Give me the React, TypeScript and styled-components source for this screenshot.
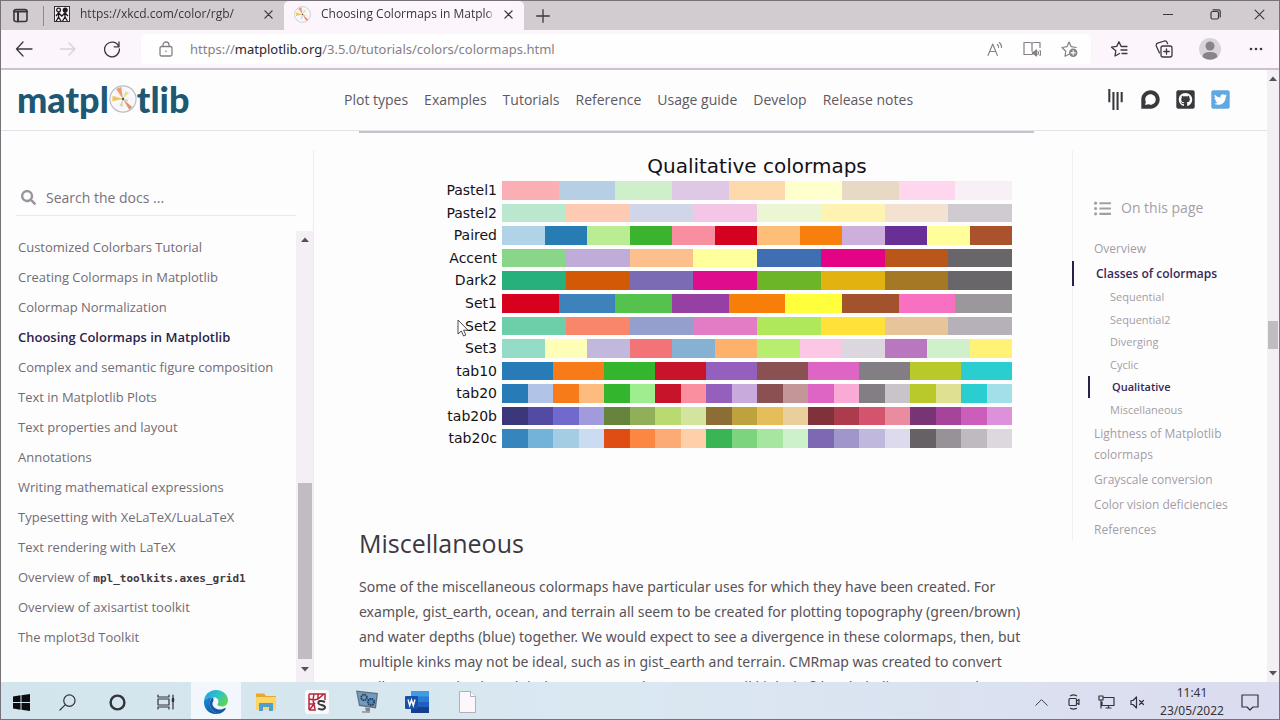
import React from "react";
import styled, { createGlobalStyle } from "styled-components";
import {
  FaDiscourse,
  FaGithubSquare,
  FaGitter,
  FaListUl,
  FaSearch,
  FaTwitterSquare,
} from "react-icons/fa";

const sans = `"Open Sans", "Noto Sans", sans-serif`;
const ui = `"Noto Sans", "Open Sans", sans-serif`;

const GlobalStyle = createGlobalStyle`
  * { box-sizing: border-box; }
  body { margin: 0; font-family: ${sans}; background: #fefdfe; }
  button { border: 0; padding: 0; background: none; color: inherit; font: inherit; }
  ul { list-style: none; margin: 0; padding: 0; }
  a { color: inherit; text-decoration: none; }
  svg { display: block; flex: none; }
`;

/* ---------- window ---------- */

const Window = styled.div`
  display: flex;
  flex-direction: column;
  height: 100vh;
  overflow: hidden;
  border: 1px solid #77727a;
`;

const TabStrip = styled.div`
  display: flex;
  align-items: stretch;
  height: 29px;
  flex: none;
  background: #d2ccd1;
  color: #3a363b;
`;

const TabActions = styled.button`
  display: grid;
  place-items: center;
  width: 38px;
`;

const TabDivider = styled.span`
  width: 1px;
  margin: 5px 0 4px 4px;
  background: #8e888e;
`;

const Tab = styled.div<{ $active?: boolean }>`
  display: flex;
  align-items: center;
  gap: 10px;
  width: 240px;
  padding: 0 11px 3px 10px;
  font-size: 12px;
  line-height: 16px;
  border-radius: 5px 5px 0 0;
  background: ${(p) => (p.$active ? "#fcf5fc" : "transparent")};
`;

const TabTitle = styled.span`
  flex: 1;
  overflow: hidden;
  white-space: nowrap;
  mask-image: linear-gradient(90deg, #000 96%, transparent);
`;

const IconButton = styled.button<{ $w?: number }>`
  display: grid;
  place-items: center;
  flex: none;
  width: ${(p) => (p.$w ? p.$w + "px" : "auto")};
`;

const WindowControls = styled.div`
  display: flex;
  margin-left: auto;
  padding-bottom: 3px;
`;

const Toolbar = styled.div`
  display: flex;
  align-items: stretch;
  height: 40px;
  flex: none;
  padding: 4px 0 4px;
  background: #fcf5fc;
  border-bottom: 2px solid #c9c3ca;
  color: #3c383e;
`;

const AddressBar = styled.div`
  display: flex;
  align-items: center;
  flex: 1;
  margin: 0 7px 0 6px;
  background: #fffeff;
  border-radius: 4px;
  color: #857f86;
`;

const UrlField = styled.div`
  flex: 1;
  display: flex;
  font: 13px/20px ${ui};
  white-space: nowrap;
  overflow: hidden;
  b {
    font-weight: 400;
    color: #29252b;
  }
`;

/* ---------- web page ---------- */

const Viewport = styled.div`
  display: flex;
  flex: 1;
  min-height: 0;
  background: #fefdfe;
`;

const Site = styled.div`
  flex: 1;
  min-width: 0;
  display: flex;
  flex-direction: column;
`;

const SiteHeader = styled.header`
  display: flex;
  align-items: center;
  flex: none;
  height: 61px;
  padding: 0 36px 0 16px;
  border-bottom: 1px solid #e6e0e7;
  color: #5d595f;
`;

const Logo = styled.a`
  display: flex;
  align-items: center;
  width: 327px;
  padding-bottom: 3px;
  font: 900 36px/44px Lato, sans-serif;
  color: #1f5873;
`;

const SiteNav = styled.nav`
  display: flex;
  flex: 1;
  gap: 16px;
  font-size: 14px;
  line-height: 20px;
  white-space: nowrap;
`;

const Social = styled.div`
  display: flex;
  gap: 14px;
  padding-bottom: 1px;
  color: #3b383d;
`;

const Columns = styled.div`
  display: flex;
  flex: 1;
  min-height: 0;
`;

const Sidebar = styled.aside`
  display: flex;
  flex-direction: column;
  width: 313px;
  flex: none;
  margin-top: 19px;
  border-right: 1px solid #f0e9f1;
`;

const Search = styled.label`
  display: flex;
  align-items: center;
  gap: 10px;
  height: 36px;
  margin: 30px 17px 15px 15px;
  padding: 0 5px;
  border-bottom: 1px solid #ece7ed;
  color: #9a959c;
  input {
    flex: 1;
    min-width: 0;
    border: 0;
    padding: 0;
    outline: 0;
    background: none;
    font: 14px/20px ${sans};
    color: #77727a;
  }
  input::placeholder {
    color: #77727a;
    opacity: 1;
  }
`;

const SideScroll = styled.div`
  display: flex;
  flex: 1;
  min-height: 0;
`;

const SideList = styled.ul`
  flex: 1;
  padding: 1px 0 0 17px;
  font-size: 13px;
  line-height: 30px;
  color: #716c73;
  white-space: nowrap;
  code {
    font: 700 11px "DejaVu Sans Mono", monospace;
    color: #3f3b42;
  }
`;

const SideItem = styled.li<{ $current?: boolean }>`
  font-weight: ${(p) => (p.$current ? 600 : 400)};
  color: ${(p) => (p.$current ? "#2b1f4c" : "inherit")};
`;

const ScrollTrack = styled.div<{ $w: number }>`
  display: flex;
  flex-direction: column;
  align-items: center;
  width: ${(p) => p.$w}px;
  flex: none;
  background: #f4eff5;
`;

const ScrollThumb = styled.span<{ $w: number; $h: number }>`
  width: ${(p) => p.$w}px;
  height: ${(p) => p.$h}px;
  background: #c1bcc2;
`;

const Gap = styled.span<{ $grow: number }>`
  flex: ${(p) => p.$grow} 1 0;
`;

const Article = styled.main`
  flex: 1;
  min-width: 0;
  padding: 0 38px 0 45px;
  overflow: hidden;
`;

const FigureEdge = styled.div`
  height: 2px;
  background: #c6c2cb;
`;

const Figure = styled.figure`
  position: relative;
  margin: 21px 22px 79px 73px;
  color: #141216;
  font-family: "DejaVu Sans", sans-serif;
  h3 {
    margin: 0 0 3px 70px;
    text-align: center;
    font-size: 20px;
    line-height: 24px;
    font-weight: 400;
  }
`;

const MapList = styled.div`
  display: grid;
  grid-template-rows: repeat(12, 1fr);
  row-gap: 4px;
  height: 267px;
`;

const MapRow = styled.div`
  display: flex;
  gap: 5px;
  min-height: 0;
`;

const MapName = styled.span`
  width: 65px;
  text-align: right;
  font-size: 14px;
  line-height: 18px;
`;

const Swatches = styled.div`
  display: flex;
  flex: 1;
`;

const Swatch = styled.span<{ $c: string }>`
  flex: 1;
  background: ${(p) => p.$c};
`;

const Cursor = styled.svg`
  position: absolute;
  left: 25px;
  top: 165px;
`;

const SectionTitle = styled.h2`
  margin: 0 0 15px;
  font-size: 25px;
  line-height: 32px;
  font-weight: 400;
  color: #3c393e;
`;

const Paragraph = styled.p`
  margin: 0;
  font: 14px/25px ${ui};
  color: #565258;
  white-space: nowrap;
  i {
    font-family: "Liberation Serif", serif;
    font-size: 17px;
    line-height: 1;
  }
`;

const Toc = styled.aside`
  width: 195px;
  flex: none;
  height: 390px;
  margin-top: 19px;
  padding-left: 21px;
  border-left: 1px solid #f3edf4;
  color: #a39da5;
`;

const TocTitle = styled.div`
  display: flex;
  align-items: center;
  gap: 10px;
  margin: 48px 0 18px;
  font-size: 14px;
  line-height: 20px;
`;

const TocLink = styled.a<{ $current?: boolean }>`
  display: block;
  padding: 2px 0;
  ${(p) =>
    p.$current &&
    `margin-left: -22px; padding-left: 22px; border-left: 2px solid #2b1f4c; color: #35295a; font-weight: 600;`}
`;

const TocList = styled.ul`
  font-size: 12px;
  line-height: 21px;
`;

const TocSubList = styled.ul`
  display: grid;
  grid-template-rows: repeat(6, 1fr);
  height: 135px;
  padding-left: 16px;
  font-size: 11px;
  line-height: 18px;
`;

/* ---------- taskbar ---------- */

const Taskbar = styled.footer`
  display: flex;
  align-items: stretch;
  flex: none;
  height: 37px;
  padding-right: 10px;
  background: linear-gradient(90deg, #d2e5ec, #dae8f2 50%, #dbdcef);
  color: #35333a;
`;

const TaskButton = styled.button<{ $w: number; $active?: boolean }>`
  display: grid;
  place-items: center;
  width: ${(p) => p.$w}px;
  padding-top: 3px;
  background: ${(p) => (p.$active ? "#f1f7fc" : "transparent")};
`;

const Tray = styled.div`
  display: flex;
  margin-left: auto;
`;

const Clock = styled.time`
  width: 78px;
  padding-top: 2px;
  text-align: center;
  font: 12px/18px ${ui};
`;

/* ---------- data ---------- */

const colormaps: [string, string][] = [
  ["Pastel1", "#fbaeb4 #b7cfe4 #cfefca #dfc7e6 #fed9ab #ffffce #e7d9c4 #fed6ee #f7f1f7"],
  ["Pastel2", "#bae8cf #fecbb2 #d0d5e8 #f3c5e7 #ebf7d2 #fff3b2 #f3e1d2 #d0cbd1"],
  ["Paired", "#b0d3e7 #287cb4 #b9ec93 #3bb32f #f88fa1 #d4011f #fdbf78 #f87f0d #cdafdb #682f96 #fffe9b #a9522b"],
  ["Accent", "#8ad688 #c0acd8 #fcc08d #ffff9b #3f6eb3 #e30384 #b9561a #69666a"],
  ["Dark2", "#27b07b #d25a07 #7b6bb4 #df0c8d #6bb526 #e2b210 #a57824 #69666a"],
  ["Set1", "#d5011f #3e82bb #56c24e #9640a3 #f77e09 #ffff3b #a2522c #f870c1 #9c979c"],
  ["Set2", "#6dceaa #f9866b #949fce #e37bc5 #afe85b #ffe13a #e7c49a #b6b0b8"],
  ["Set3", "#95dcc8 #fffeb7 #c2b7dc #f37477 #86b1d2 #fdb16b #b7ee70 #fbc7e5 #dcd7de #b877bf #cff0ca #fff276"],
  ["tab10", "#277cb7 #f77b19 #34b52e #c8142b #955fbd #8b5152 #df65c5 #837e84 #bac92a #2acdd0"],
  ["tab20", "#277cb7 #b1c4e8 #f77b19 #fdbb80 #34b52e #9eee8f #c8142b #fa8fa0 #955fbd #c8abdc #8b5152 #c39798 #df65c5 #f9abd5 #837e84 #c9c4ca #bac92a #dfe091 #2acdd0 #a2e0e9"],
  ["tab20b", "#3c367b #534ba3 #7269cf #a19bdd #66843c #91ae59 #b9da70 #d3e49f #8b6d35 #bea23e #e5be5a #e9cf9c #80323b #ac3c4c #d4546e #e98c9f #793475 #a54498 #cc5dbb #dd91da"],
  ["tab20c", "#3785bd #73b2d9 #a4cde3 #cbdcf2 #df4d15 #fb8743 #fbab73 #fecfa9 #39b556 #7cd47e #a7e6a0 #cdf1c8 #7c68b3 #a196cc #c1b9dd #dddaee #656165 #979297 #bebabf #dcd8dd"],
];

const navLinks = ["Plot types", "Examples", "Tutorials", "Reference", "Usage guide", "Develop", "Release notes"];

const tutorials: React.ReactNode[] = [
  "Customized Colorbars Tutorial",
  "Creating Colormaps in Matplotlib",
  "Colormap Normalization",
  "Choosing Colormaps in Matplotlib",
  "Complex and semantic figure composition",
  "Text in Matplotlib Plots",
  "Text properties and layout",
  "Annotations",
  "Writing mathematical expressions",
  "Typesetting with XeLaTeX/LuaLaTeX",
  "Text rendering with LaTeX",
  <>Overview of <code>mpl_toolkits.axes_grid1</code></>,
  "Overview of axisartist toolkit",
  "The mplot3d Toolkit",
];

const toc: { title: string; children?: string[] }[] = [
  { title: "Overview" },
  {
    title: "Classes of colormaps",
    children: ["Sequential", "Sequential2", "Diverging", "Cyclic", "Qualitative", "Miscellaneous"],
  },
  { title: "Lightness of Matplotlib colormaps" },
  { title: "Grayscale conversion" },
  { title: "Color vision deficiencies" },
  { title: "References" },
];

/* ---------- drawings ---------- */

const Line = ({ w = 18, h = 18, sw = 1.3, box = "0 0 18 18", children }: any) => (
  <svg width={w} height={h} viewBox={box} fill="none" stroke="currentColor" strokeWidth={sw} strokeLinecap="round" strokeLinejoin="round">
    {children}
  </svg>
);

const CloseX = ({ s = 9, sw = 1.4 }) => (
  <Line w={s} h={s} box="0 0 10 10" sw={sw}><path d="M1 1l8 8M9 1l-8 8" /></Line>
);

const Pie = ({ s }: { s: number }) => (
  <svg width={s} height={s} viewBox="0 0 30 30">
    <circle cx="15" cy="15" r="14" fill="#faf8fa" stroke="#b6bcc8" strokeWidth="1.2" />
    <circle cx="15" cy="15" r="9.3" fill="none" stroke="#ececf0" strokeWidth=".4" />
    <path d="M1 15h28M15 1v28M5 5l20 20M25 5L5 25" stroke="#ececf0" strokeWidth=".4" />
    <path d="M15 15L7.500 4.200l5.600-2z" fill="#eb9d78" />
    <path d="M15 15L3.500 17.500l.4-6z" fill="#f0c659" />
    <path d="M15 15l2.400-8.200 3.800 1.600z" fill="#dbe39b" />
    <path d="M15 15l9.800 8.500-3.200 3z" fill="#e68f6d" />
    <path d="M15 15l-.5 8-3.300-.8z" fill="#c3dcae" />
    <path d="M15 15l5.500 1-.8 2z" fill="#b7d3bd" />
    <circle cx="15" cy="15" r="1.300" fill="#555" />
  </svg>
);

const XkcdIcon = () => (
  <svg width="16" height="16" viewBox="0 0 16 16">
    <rect x=".5" y=".5" width="15" height="15" fill="#f4f0f4" stroke="#333" />
    <g stroke="#1c1a1d" strokeWidth="1.3" fill="none">
      <circle cx="4.6" cy="4" r="1.9" />
      <circle cx="11.2" cy="4" r="1.9" fill="#1c1a1d" />
      <path d="M4.6 6v5l-2.4 4M4.6 11l2.4 4M4.6 7L2 10M4.6 7l3.2 3 3.2-3 3 3M11 6v5l-2.4 4M11 11l2.4 4" />
    </g>
  </svg>
);

const Arrow = ({ up }: { up?: boolean }) => (
  <svg width="8" height="5" viewBox="0 0 8 5">
    <path d={up ? "M0 5l4-4.5L8 5z" : "M0 0l4 4.5L8 0z"} fill="#55515a" />
  </svg>
);

const EdgeLogo = () => (
  <svg width="26" height="26" viewBox="0 0 26 26">
    <defs>
      <linearGradient id="edgeTop" x1="0" y1="0" x2="1" y2=".6">
        <stop offset="0" stopColor="#1aa0e0" /><stop offset=".55" stopColor="#2cc3c9" /><stop offset="1" stopColor="#5ed455" />
      </linearGradient>
      <linearGradient id="edgeLow" x1="0" y1="0" x2="1" y2="1">
        <stop offset="0" stopColor="#1d8fdc" /><stop offset="1" stopColor="#0c4a94" />
      </linearGradient>
    </defs>
    <path d="M1 12.5C1 6 6.4 1 13 1s12 4.600 12 10.500c0 3.800-2.800 6-6 6-3 0-4.600-1.200-4.600-2 0-.6 1-1.200 1-3.100 0-2.300-2-4.200-5-4.200C5.500 8.200 1.600 10 1 12.500z" fill="url(#edgeTop)" />
    <path d="M1 12.500C1.500 10 5 8.200 10.400 8.200 8 9 6.500 12 6.800 15.500 7.300 20 11 24 15.500 24.700 7 26.500 .5 20.500 1 12.500z" fill="url(#edgeLow)" />
    <path d="M10.400 12c-1.200 1.500-1.300 3.500-.2 5.300 1.800 2.900 6.300 4.400 11.300 1.900.9-.4 1.600.2 1 1.100-1.900 3-5 4.400-7 4.400C11 24 7.300 20 6.800 15.500 6.600 12 8 9 10.400 8.200z" fill="#155aa8" />
  </svg>
);

const FolderIcon = () => (
  <svg width="22" height="20" viewBox="0 0 22 20">
    <path d="M1 1.500h8l2 2.500h10v14H1z" fill="#e7a92c" />
    <path d="M1 5h20v13H1z" fill="#fbd565" />
    <path d="M4 11h14v8h-4v-4H8v4H4z" fill="#4f9fce" />
  </svg>
);

const SpyderIcon = () => (
  <svg width="24" height="24" viewBox="0 0 24 24">
    <rect width="24" height="24" rx="3" fill="#fcf9fb" />
    <path d="M4 4h16v6M4 4v15q0 1 1 1h6M4 9l5 1M4 14l5 0M9 4L8 10l2 9M19 4l-6 5-4 1M13 4v5M5 19l5-6" stroke="#b5263c" strokeWidth="1.500" fill="none" />
    <path d="M20 12c-4-2-7.500-1-6.500 1.500.8 2 6.500 1 6.500 3.800 0 2.500-4.500 2.700-7 1.200" stroke="#3d3b3f" strokeWidth="2" fill="none" />
  </svg>
);

const MonitorGear = () => (
  <svg width="24" height="24" viewBox="0 0 24 24">
    <path d="M1 .500l22 2.500-2 15.500L4 16z" fill="#66717f" />
    <path d="M2.500 2l19 2.200-1.700 12.500L5 14.600z" fill="#6f9bc4" />
    <circle cx="9" cy="7.500" r="2.800" fill="none" stroke="#27394f" strokeWidth="1.800" strokeDasharray="1.500 .7" />
    <circle cx="16" cy="12" r="3.200" fill="#4a86be" stroke="#27394f" strokeWidth="1.800" strokeDasharray="1.500 .7" />
    <path d="M10 17.500l5 .5 0 3-4 .5z" fill="#7c8590" />
    <path d="M7 22h8" stroke="#8b919a" strokeWidth="1.500" />
  </svg>
);

const WordIcon = () => (
  <svg width="24" height="22" viewBox="0 0 24 22">
    <rect x="6" y="0" width="18" height="6" fill="#3f9be6" />
    <rect x="6" y="5.500" width="18" height="6" fill="#2b7cd3" />
    <rect x="6" y="11" width="18" height="5.500" fill="#1f5fbe" />
    <rect x="6" y="16" width="18" height="6" fill="#153f8e" />
    <rect x="0" y="5" width="13" height="13" rx="1" fill="#1750a8" />
    <path d="M3 8.500l1.700 6 1.800-5.500 1.800 5.500 1.700-6" fill="none" stroke="#fff" strokeWidth="1.400" />
  </svg>
);

/* ---------- app ---------- */

export default function App() {
  return (
    <Window>
      <GlobalStyle />
      <TabStrip>
        <TabActions aria-label="Tab actions">
          <Line w={15} h={15} box="0 0 15 15" sw={1.6}>
            <rect x="1" y="1.500" width="13" height="12" rx="2" /><path d="M1 3.500h13M5 3.500v10" strokeWidth="2" />
          </Line>
        </TabActions>
        <TabDivider />
        <Tab>
          <XkcdIcon />
          <TabTitle>https://xkcd.com/color/rgb/</TabTitle>
          <IconButton aria-label="Close tab"><CloseX /></IconButton>
        </Tab>
        <Tab $active>
          <Pie s={17} />
          <TabTitle>Choosing Colormaps in Matplotlib</TabTitle>
          <IconButton aria-label="Close tab"><CloseX /></IconButton>
        </Tab>
        <IconButton $w={38} aria-label="New tab">
          <Line w={14} h={14} box="0 0 14 14"><path d="M7 .7v12.600M.7 7h12.600" /></Line>
        </IconButton>
        <WindowControls>
          <IconButton $w={46} aria-label="Minimize"><Line w={10} h={10} box="0 0 10 10" sw={1}><path d="M0 5.500h10" /></Line></IconButton>
          <IconButton $w={48} aria-label="Restore">
            <Line w={11} h={11} box="0 0 11 11" sw={1.200}><rect x="1" y="2.500" width="7.500" height="7.500" rx="1.500" /><path d="M3 .8h5.500q1.700 0 1.700 1.700V8" /></Line>
          </IconButton>
          <IconButton $w={40} aria-label="Close"><CloseX s={11} sw={1} /></IconButton>
        </WindowControls>
      </TabStrip>

      <Toolbar>
        <IconButton $w={46} aria-label="Back"><Line><path d="M17 9H1.500M8 2L1.500 9 8 16" /></Line></IconButton>
        <IconButton $w={42} aria-label="Forward" disabled><Line><g stroke="#d8d1d9"><path d="M1.500 9H16M10 3l6 6-6 6" /></g></Line></IconButton>
        <IconButton $w={46} aria-label="Refresh"><Line><path d="M15.800 6.500A7.400 7.400 0 1 0 16.400 9M16 2v4.800h-4.800" /></Line></IconButton>
        <AddressBar>
          <IconButton $w={49} aria-label="Site information">
            <Line w={14} h={16} box="0 0 14 16"><rect x="1" y="5.500" width="12" height="9.500" rx="1.500" /><path d="M4 5.500V4a3 3 0 0 1 6 0v1.500M7 10v.6" /></Line>
          </IconButton>
          <UrlField><span>https://</span><b>matplotlib.org</b><span>/3.5.0/tutorials/colors/colormaps.html</span></UrlField>
          <IconButton $w={46} aria-label="Read aloud">
            <Line w={16} h={16} box="0 0 16 16" sw={1.100}><path d="M1 14.500L5.700 3l4.700 11.500M2.700 10.500h6M10.500 3.500q1.200 1.200 1 3M12.500 1.500q2.200 2.200 2 5" /></Line>
          </IconButton>
          <IconButton $w={28} aria-label="Immersive reader">
            <Line w={18} h={16} box="0 0 18 16" sw={1.200}>
              <path d="M9 13.500H1V1.500h6q2 0 2 1.500 0-1.500 2-1.500h6v5M9 3v7" />
              <path d="M9.500 11h1.700l2.300-2v6l-2.300-2H9.500z" fill="currentColor" /><path d="M15 10.500q1 1.500 0 3M17 9.500q1.400 2.500 0 5" />
            </Line>
          </IconButton>
          <IconButton $w={45} aria-label="Add to favorites">
            <Line sw={1.200}>
              <path d="M9.500 14L5 16.200l.8-5L2 7.500l5-.8L9 2l2.200 4.700 5 .8" /><circle cx="13.200" cy="12.800" r="4.200" fill="currentColor" stroke="none" />
              <path d="M13.200 10.600v4.400M11 12.800h4.400" stroke="#fff" />
            </Line>
          </IconButton>
        </AddressBar>
        <IconButton $w={42} aria-label="Favorites">
          <Line><path d="M9.500 13.500L5 16l.8-5.200L1.500 7.200l5.200-.8L9 1.800l2 4.400M11.500 6.500H17M11 10h6M12 13.500h5" /></Line>
        </IconButton>
        <IconButton $w={47} aria-label="Collections">
          <Line><rect x="6" y="6" width="11" height="11" rx="2" /><path d="M11.500 8.800v5.400M8.800 11.500h5.400M4.500 13L1.300 6Q.8 4 2.600 3.200L9.500 1q1.800-.4 2.500 1.200l.6 1.500" /></Line>
        </IconButton>
        <IconButton $w={46} aria-label="Profile">
          <svg width="22" height="22" viewBox="0 0 22 22">
            <circle cx="11" cy="11" r="11" fill="#d9d4da" /><circle cx="11" cy="8" r="4.500" fill="#88838a" /><path d="M3.500 19q0-5 7.500-5t7.500 5q-7.500 5.500-15 0z" fill="#88838a" />
          </svg>
        </IconButton>
        <IconButton $w={46} aria-label="Settings and more">
          <svg width="14" height="4" viewBox="0 0 14 4" fill="currentColor"><circle cx="2" cy="2" r="1.300" /><circle cx="7" cy="2" r="1.300" /><circle cx="12" cy="2" r="1.300" /></svg>
        </IconButton>
      </Toolbar>

      <Viewport>
        <Site>
          <SiteHeader>
            <Logo href="#" aria-label="matplotlib">matpl<Pie s={28} />tlib</Logo>
            <SiteNav>{navLinks.map((l) => <a href="#" key={l}>{l}</a>)}</SiteNav>
            <Social>
              <a href="#" aria-label="Gitter"><FaGitter size={21} /></a>
              <a href="#" aria-label="Discourse"><FaDiscourse size={21} /></a>
              <a href="#" aria-label="GitHub"><FaGithubSquare size={21} /></a>
              <a href="#" aria-label="Twitter"><FaTwitterSquare size={21} color="#5fa8e2" /></a>
            </Social>
          </SiteHeader>
          <Columns>
            <Sidebar>
              <Search>
                <FaSearch size={15} />
                <input type="text" placeholder="Search the docs ..." aria-label="Search the docs" />
              </Search>
              <SideScroll>
                <SideList>
                  {tutorials.map((t, i) => (
                    <SideItem key={i} $current={i === 3}><a href="#">{t}</a></SideItem>
                  ))}
                </SideList>
                <ScrollTrack $w={17}>
                  <Gap $grow={6} /><Arrow up /><Gap $grow={241} />
                  <ScrollThumb $w={14} $h={176} />
                  <Gap $grow={8} /><Arrow /><Gap $grow={10} />
                </ScrollTrack>
              </SideScroll>
            </Sidebar>
            <Article>
              <FigureEdge />
              <Figure>
                <h3>Qualitative colormaps</h3>
                <MapList>
                  {colormaps.map(([name, colors]) => (
                    <MapRow key={name}>
                      <MapName>{name}</MapName>
                      <Swatches>{colors.split(" ").map((c, i) => <Swatch key={i} $c={c} />)}</Swatches>
                    </MapRow>
                  ))}
                </MapList>
                <Cursor width="13" height="18" viewBox="0 0 13 18">
                  <path d="M1 1v14l3.300-3 2.300 5 2.200-1-2.200-4.800H11z" fill="#fff" stroke="#3a373c" strokeWidth=".9" />
                </Cursor>
              </Figure>
              <SectionTitle>Miscellaneous</SectionTitle>
              <Paragraph>
                Some of the miscellaneous colormaps have particular uses for which they have been created. For<br />
                example, gist_earth, ocean, and terrain all seem to be created for plotting topography (green/brown)<br />
                and water depths (blue) together. We would expect to see a divergence in these colormaps, then, but<br />
                multiple kinks may not be ideal, such as in gist_earth and terrain. CMRmap was created to convert<br />
                well to grayscale, though it does appear to have some small kinks in <i>L</i>*. cubehelix was created to
              </Paragraph>
            </Article>
            <Toc>
              <TocTitle><FaListUl size={17} />On this page</TocTitle>
              <TocList>
                {toc.map(({ title, children }) => (
                  <li key={title}>
                    <TocLink href="#" $current={!!children}>{title}</TocLink>
                    {children && (
                      <TocSubList>
                        {children.map((c) => (
                          <li key={c}><TocLink href="#" $current={c === "Qualitative"}>{c}</TocLink></li>
                        ))}
                      </TocSubList>
                    )}
                  </li>
                ))}
              </TocList>
            </Toc>
          </Columns>
        </Site>
        <ScrollTrack $w={12}>
          <Gap $grow={6} /><Arrow up /><Gap $grow={240} />
          <ScrollThumb $w={10} $h={28} />
          <Gap $grow={322} /><Arrow /><Gap $grow={6} />
        </ScrollTrack>
      </Viewport>

      <Taskbar>
        <TaskButton $w={40} aria-label="Start">
          <svg width="17" height="17" viewBox="0 0 17 17" fill="#0d0d10"><path d="M0 2.500l7.500-1.200V8H0zM8.500 1.200L17 0v8H8.500zM0 9h7.500v6.700L0 14.500zM8.500 9H17v8l-8.500-1.200z" /></svg>
        </TaskButton>
        <TaskButton $w={52} aria-label="Search"><Line w={17} h={17}><circle cx="11" cy="7" r="6" /><path d="M6.500 11.500L1 17" /></Line></TaskButton>
        <TaskButton $w={48} aria-label="Cortana"><Line w={17} h={17} sw={2.600}><circle cx="9" cy="9" r="7.300" /></Line></TaskButton>
        <TaskButton $w={50} aria-label="Task view">
          <Line w={18} h={16} box="0 0 18 16" sw={1.200}><path d="M1 1v2h11V1M1 15v-2h11v2M1 5h11v6H1zM16 1v14" /><path d="M16 5v2" strokeWidth="2.500" /></Line>
        </TaskButton>
        <TaskButton $w={50} $active aria-label="Microsoft Edge"><EdgeLogo /></TaskButton>
        <TaskButton $w={50} aria-label="File Explorer"><FolderIcon /></TaskButton>
        <TaskButton $w={51} aria-label="Spyder"><SpyderIcon /></TaskButton>
        <TaskButton $w={50} aria-label="Remote desktop"><MonitorGear /></TaskButton>
        <TaskButton $w={50} aria-label="Word"><WordIcon /></TaskButton>
        <TaskButton $w={51} aria-label="Document">
          <svg width="17" height="22" viewBox="0 0 17 22"><path d="M.5.500h11l5 5v16H.5z" fill="#fbf7fa" stroke="#b5afb8" /><path d="M11.500.5v5h5" fill="#fff" stroke="#b5afb8" /></svg>
        </TaskButton>
        <Tray>
          <TaskButton $w={32} aria-label="Show hidden icons"><Line w={13} h={13}><path d="M1 13l8-8 8 8" /></Line></TaskButton>
          <TaskButton $w={33} aria-label="Meet now">
            <Line w={14} h={16} box="0 0 14 16" sw={1.200}><rect x="2" y="4.500" width="7.500" height="7" rx="1" /><path d="M9.500 7l2.500-1.500v5L9.500 9M3.500 1.800Q6.500 0 9.500 1.800M3.500 14.200q3 1.800 6 0" /></Line>
          </TaskButton>
          <TaskButton $w={32} aria-label="Network">
            <Line w={17} h={14} box="0 0 17 14" sw={1.200}><path d="M6 2.500h10v8H4V7M8 13h5M10.500 10.500V13M1 1h4v4H1zM3 5v8" /></Line>
          </TaskButton>
          <TaskButton $w={31} aria-label="Volume muted">
            <Line w={15} h={13} box="0 0 15 13" sw={1.200}><path d="M1 4.500h2L6.500 1v11L3 8.500H1zM9.500 4.500l4 4M13.500 4.500l-4 4" /></Line>
          </TaskButton>
          <Clock>11:41<br />23/05/2022</Clock>
          <TaskButton $w={38} aria-label="Notifications"><Line w={18} h={17} box="0 0 18 17" sw={1.200}><path d="M1 1h16v12h-5l-3 3-3-3H1z" /></Line></TaskButton>
        </Tray>
      </Taskbar>
    </Window>
  );
}
